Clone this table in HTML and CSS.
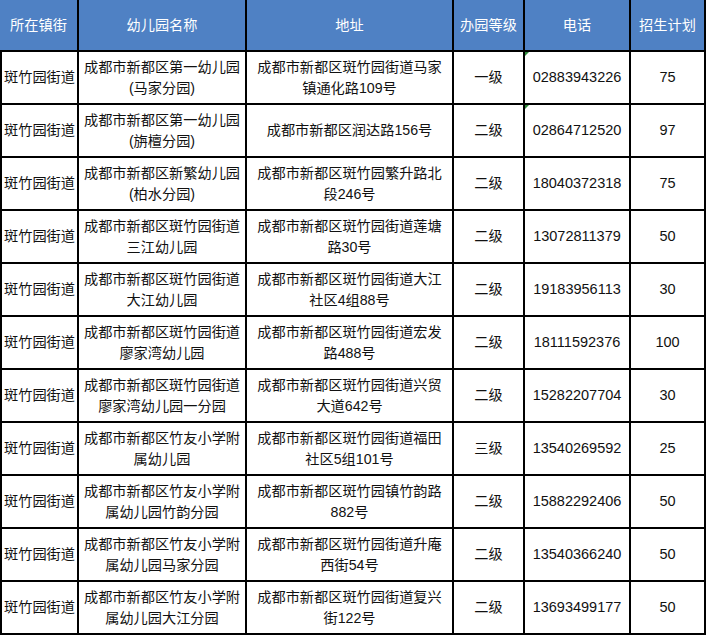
FILE: index.html
```html
<!DOCTYPE html>
<html lang="zh">
<head>
<meta charset="utf-8">
<title>幼儿园招生计划</title>
<link rel="stylesheet" href="styles.css">
</head>
<body>
<div class="sheet">
  <div class="hd first">所在镇街</div>
  <div class="hd">幼儿园名称</div>
  <div class="hd">地址</div>
  <div class="hd">办园等级</div>
  <div class="hd">电话</div>
  <div class="hd last">招生计划</div>

  <div class="c first">斑竹园街道</div>
  <div class="c">成都市新都区第一幼儿园<br>(马家分园)</div>
  <div class="c">成都市新都区斑竹园街道马家<br>镇通化路109号</div>
  <div class="c">一级</div>
  <div class="c num flag">02883943226</div>
  <div class="c num">75</div>

  <div class="c first">斑竹园街道</div>
  <div class="c">成都市新都区第一幼儿园<br>(旃檀分园)</div>
  <div class="c">成都市新都区润达路156号</div>
  <div class="c">二级</div>
  <div class="c num flag">02864712520</div>
  <div class="c num">97</div>

  <div class="c first">斑竹园街道</div>
  <div class="c">成都市新都区新繁幼儿园<br>(柏水分园)</div>
  <div class="c">成都市新都区斑竹园繁升路北<br>段246号</div>
  <div class="c">二级</div>
  <div class="c num">18040372318</div>
  <div class="c num">75</div>

  <div class="c first">斑竹园街道</div>
  <div class="c">成都市新都区斑竹园街道<br>三江幼儿园</div>
  <div class="c">成都市新都区斑竹园街道莲塘<br>路30号</div>
  <div class="c">二级</div>
  <div class="c num">13072811379</div>
  <div class="c num">50</div>

  <div class="c first">斑竹园街道</div>
  <div class="c">成都市新都区斑竹园街道<br>大江幼儿园</div>
  <div class="c">成都市新都区斑竹园街道大江<br>社区4组88号</div>
  <div class="c">二级</div>
  <div class="c num">19183956113</div>
  <div class="c num">30</div>

  <div class="c first">斑竹园街道</div>
  <div class="c">成都市新都区斑竹园街道<br>廖家湾幼儿园</div>
  <div class="c">成都市新都区斑竹园街道宏发<br>路488号</div>
  <div class="c">二级</div>
  <div class="c num">18111592376</div>
  <div class="c num">100</div>

  <div class="c first">斑竹园街道</div>
  <div class="c">成都市新都区斑竹园街道<br>廖家湾幼儿园一分园</div>
  <div class="c">成都市新都区斑竹园街道兴贸<br>大道642号</div>
  <div class="c">二级</div>
  <div class="c num">15282207704</div>
  <div class="c num">30</div>

  <div class="c first">斑竹园街道</div>
  <div class="c">成都市新都区竹友小学附<br>属幼儿园</div>
  <div class="c">成都市新都区斑竹园街道福田<br>社区5组101号</div>
  <div class="c">三级</div>
  <div class="c num">13540269592</div>
  <div class="c num">25</div>

  <div class="c first">斑竹园街道</div>
  <div class="c">成都市新都区竹友小学附<br>属幼儿园竹韵分园</div>
  <div class="c">成都市新都区斑竹园镇竹韵路<br>882号</div>
  <div class="c">二级</div>
  <div class="c num">15882292406</div>
  <div class="c num">50</div>

  <div class="c first">斑竹园街道</div>
  <div class="c">成都市新都区竹友小学附<br>属幼儿园马家分园</div>
  <div class="c">成都市新都区斑竹园街道升庵<br>西街54号</div>
  <div class="c">二级</div>
  <div class="c num">13540366240</div>
  <div class="c num">50</div>

  <div class="c first">斑竹园街道</div>
  <div class="c">成都市新都区竹友小学附<br>属幼儿园大江分园</div>
  <div class="c">成都市新都区斑竹园街道复兴<br>街122号</div>
  <div class="c">二级</div>
  <div class="c num">13693499177</div>
  <div class="c num">50</div>
</div>
</body>
</html>
```
FILE: styles.css
```css
html, body {
  margin: 0;
  padding: 0;
  background: #ffffff;
}

.sheet {
  display: grid;
  grid-template-columns: 79px 168px 207px 71px 106px 75px;
  grid-template-rows: 52px;
  grid-auto-rows: 53px;
  width: 706px;
  font-family: "Liberation Sans", "Noto Sans CJK SC", sans-serif;
  font-size: 14.2px;
  line-height: 21px;
  color: #111111;
}

.hd,
.c {
  box-sizing: border-box;
  display: flex;
  align-items: center;
  justify-content: center;
  text-align: center;
  border-right: 2px solid #000000;
  border-bottom: 2px solid #000000;
  white-space: nowrap;
}

.hd {
  background: #4f81c4;
  color: #ffffff;
}

.c.first {
  border-left: 2px solid #000000;
}

.num {
  font-size: 14.5px;
}

.flag {
  position: relative;
}

.flag::before {
  content: "";
  position: absolute;
  left: 0;
  top: 0;
  width: 0;
  height: 0;
  border-top: 4px solid #2e8b3a;
  border-right: 4px solid transparent;
}
```
